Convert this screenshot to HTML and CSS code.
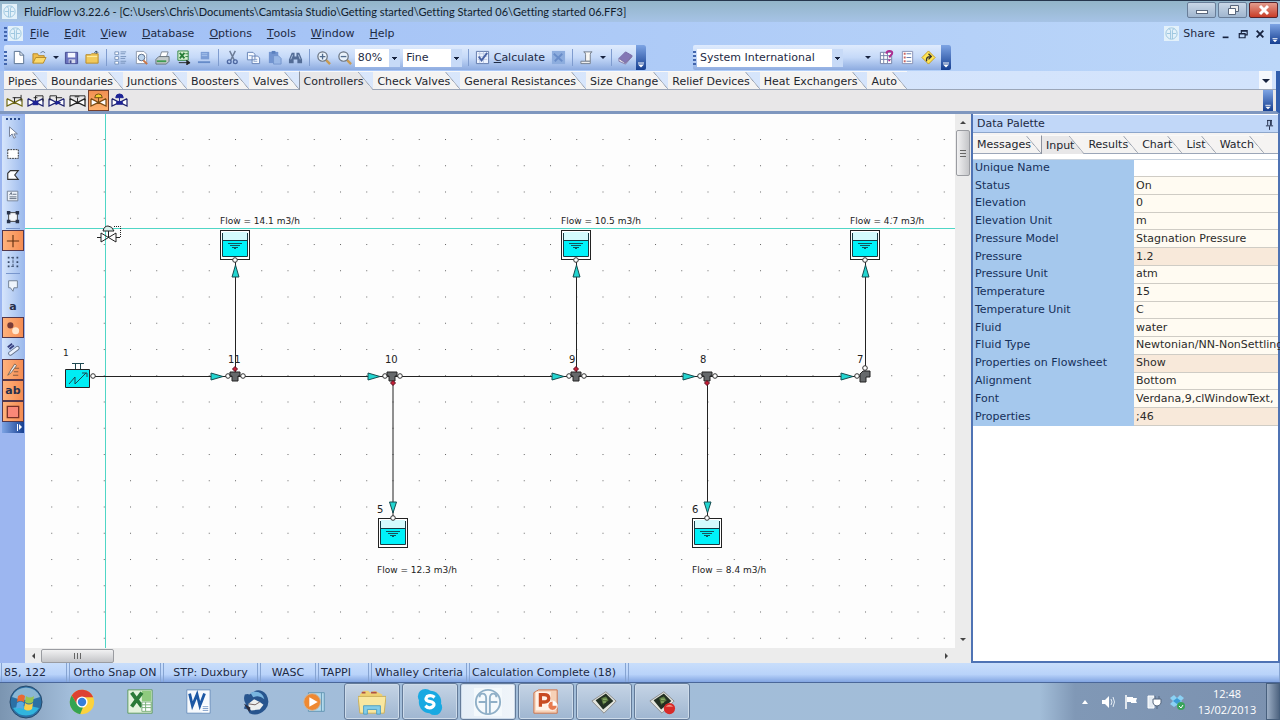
FILE: index.html
```html
<!DOCTYPE html>
<html lang="en">
<head>
    <meta charset="UTF-8">
    <meta name="viewport" content="width=device-width, initial-scale=1.0">
    <title>FluidFlow v3.22.6</title>
    <link rel="stylesheet" href="styles.css">
</head>
<body>
    <!-- shared icons -->
    <svg class="sprite" aria-hidden="true">
        <symbol id="logo" viewBox="0 0 16 16"><rect width="16" height="16" fill="#e3f1fa"/><circle cx="8" cy="8" r="6" fill="none" stroke="#9bc4de"/><path d="M7 14V5q0-2-2-2M9 14V5q0-2 2-2M3 8h4M9 8h4" fill="none" stroke="#9bc4de"/></symbol>
        <symbol id="valve" viewBox="0 0 18 16"><path d="M1 6v8l8-4-8-4M17 6v8l-8-4 8-4" fill="#fff" stroke="currentColor" stroke-width="1.3"/></symbol>
        <symbol id="tank" viewBox="0 0 30 31"><rect x=".5" y=".5" width="29" height="29" fill="#fff" stroke="#222"/><rect x="3" y="2" width="24" height="9" fill="#d4fbfd"/><rect x="3" y="11" width="24" height="15" fill="#00f2fa"/><path d="M2.500 3v23.500h25V3M3 10.500h24" fill="none" stroke="#163c44"/><path d="M8 13.500h14M10 15.500h10M12 17.500h6M14 18.500h2" stroke="#14545c"/></symbol>
        <symbol id="cap" viewBox="0 0 10 24"><path d="M2 17.500h6" stroke="#fff"/><path d="M2 19h6L5 22z" fill="#fff"/></symbol>
        <symbol id="magnifier" viewBox="0 0 16 16"><path d="M10 10l5 5" stroke="#c79a52" stroke-width="2.500"/><circle cx="7" cy="7" r="5" fill="#e9f2fb" stroke="#68727f" stroke-width="1.300"/></symbol>
        <symbol id="camtasia" viewBox="0 0 30 30"><path d="M2 14L17 4l11 10-13 13z" fill="#e3e5df" stroke="#888"/><path d="M6 13l11-7 8 8-11 9z" fill="#233023"/><path d="M12 11l5-2 3 4-6 5z" fill="#59783d"/><path d="M14 12h4M14 15h3" stroke="#a9c987"/></symbol>
    </svg>

    <header class="title-bar">
        <svg class="icon"><use href="#logo"/></svg>
        <h1>FluidFlow v3.22.6 - [C:\Users\Chris\Documents\Camtasia Studio\Getting started\Getting Started 06\Getting started 06.FF3]</h1>
        <div class="window-buttons">
            <button aria-label="Minimize"><svg viewBox="0 0 16 12"><rect x="2.500" y="6.500" width="11" height="3" fill="#fff" stroke="#59677c"/></svg></button>
            <button aria-label="Restore"><svg viewBox="0 0 16 12"><path d="M5.500 1.500h8v6h-8z" fill="#eee" stroke="#59677c"/><path d="M3.500 4.500h7v6h-7z" fill="#fff" stroke="#59677c"/></svg></button>
            <button class="close" aria-label="Close"><svg viewBox="0 0 16 12"><path d="M4 2l8 8M12 2l-8 8" stroke="#fff" stroke-width="3"/></svg></button>
        </div>
    </header>

    <nav class="menu-bar">
        <span class="grip"></span>
        <svg class="icon"><use href="#logo"/></svg>
        <button><u>F</u>ile</button>
        <button><u>E</u>dit</button>
        <button><u>V</u>iew</button>
        <button><u>D</u>atabase</button>
        <button><u>O</u>ptions</button>
        <button><u>T</u>ools</button>
        <button><u>W</u>indow</button>
        <button><u>H</u>elp</button>
        <div class="menu-right">
            <button class="share"><svg class="icon"><use href="#logo"/></svg>Share</button>
            <button class="mini" aria-label="Minimize document"><svg viewBox="0 0 12 12"><path d="M2 10h7" stroke="#17233f" stroke-width="2"/></svg></button>
            <button class="mini" aria-label="Restore document"><svg viewBox="0 0 12 12"><path d="M4 5V2h7v5H9M1.500 5.500h7v5h-7zM4 2.500h7M2 6h6" fill="none" stroke="#17233f" stroke-width="1.400"/></svg></button>
            <button class="mini" aria-label="Close document"><svg viewBox="0 0 12 12"><path d="M2 2l8 8M10 2l-8 8" stroke="#17233f" stroke-width="2.200"/></svg></button>
            <button class="cap" aria-label="Menu options"><svg><use href="#cap"/></svg></button>
        </div>
    </nav>

    <div class="toolbars">
        <div class="toolbar main-tools">
            <span class="grip"></span>
            <button class="tool" aria-label="New"><svg viewBox="0 0 16 16"><path d="M3.500 1.500h6l4 4v9h-10z" fill="#fff" stroke="#58708f"/><path d="M9.500 1.500v4h4" fill="none" stroke="#58708f"/></svg></button>
            <button class="tool" aria-label="Open"><svg viewBox="0 0 16 16"><path d="M1 14V4h5l1 2h6v3" fill="#f0bd4b" stroke="#b68a28"/><path d="M1 14l3-6h11l-3 6z" fill="#fbda6d" stroke="#b68a28"/><path d="M9 3q3-3 5 0" fill="none" stroke="#657c99"/></svg></button>
            <button class="drop" aria-label="Recent files"></button>
            <button class="tool" aria-label="Save"><svg viewBox="0 0 16 16"><path d="M1.500 2.500h13v12h-13z" fill="#6a72bd" stroke="#454c91"/><path d="M4 3h8v5H4z" fill="#f4f6ff"/><path d="M5 10h7v4H5z" fill="#d5d9ec"/><path d="M6 11h2v3H6z" fill="#454c91"/></svg></button>
            <button class="tool" aria-label="Close file"><svg viewBox="0 0 16 16"><path d="M1 14V5h5l1-1h7v10z" fill="#f1c95b" stroke="#b68a28"/><path d="M2 7h11" stroke="#fff0a8"/><path d="M12 4V1M10 3l2-2 2 2" fill="none" stroke="#384c5f"/></svg></button>
            <span class="sep"></span>
            <button class="tool" aria-label="Details"><svg viewBox="0 0 16 16"><path d="M2 2h4v3H2zM2 7h4v3H2zM2 12h4v3H2z" fill="#fff" stroke="#7793bb"/><path d="M8 2h6M8 4h5M8 7h6M8 9h5M8 12h6M8 14h5" stroke="#7793bb"/></svg></button>
            <button class="tool" aria-label="Print preview"><svg viewBox="0 0 16 16"><path d="M2.500 1.500h8l3 3v10h-11z" fill="#fff" stroke="#8b98ab"/><circle cx="8" cy="8" r="3.500" fill="#bdd5ee" stroke="#586a86"/><path d="M10 11l4 4" stroke="#c87444" stroke-width="2"/></svg></button>
            <button class="tool" aria-label="Print"><svg viewBox="0 0 16 16"><path d="M5 8l2-6h7l-2 6z" fill="#fff" stroke="#7d8894"/><path d="M1 10l3-3h11v5l-3 3H1z" fill="#c3c9ca" stroke="#65717a"/><path d="M2 12h10" stroke="#3f9b52" stroke-width="2"/></svg></button>
            <button class="tool" aria-label="Export to Excel"><svg viewBox="0 0 16 16"><path d="M2 1h11v10H2z" fill="#d7f0d2" stroke="#318342"/><path d="M4 3l5 6M9 3L4 9" stroke="#267d38" stroke-width="2"/><path d="M10 4h3M10 7h3" stroke="#318342"/><path d="M3 13.500h10M11 11l4 2.500-4 2.500" fill="#222" stroke="#222"/></svg></button>
            <button class="tool" aria-label="Send"><svg viewBox="0 0 16 16"><path d="M4 2h9v8H4z" fill="#7b9dd5"/><path d="M5 4h6M5 6h6" stroke="#a9c4ed"/><path d="M1 13h13" stroke="#668bc9" stroke-width="2"/></svg></button>
            <span class="sep"></span>
            <button class="tool" aria-label="Cut"><svg viewBox="0 0 16 16"><path d="M5 1l5 10M11 1L6 11" stroke="#6b7b96" stroke-width="1.500"/><circle cx="4.500" cy="12.500" r="2" fill="none" stroke="#4c66a0" stroke-width="1.400"/><circle cx="11" cy="12.500" r="2" fill="none" stroke="#4c66a0" stroke-width="1.400"/></svg></button>
            <button class="tool" aria-label="Copy"><svg viewBox="0 0 16 16"><path d="M1.500 2.500h6l2 2v6h-8zM6.500 6.500h6l2 2v6h-8z" fill="#f5f9ff" stroke="#6481b4"/><path d="M3 6h4M8 10h4M8 12h4" stroke="#89a2ca"/></svg></button>
            <button class="tool" aria-label="Paste"><svg viewBox="0 0 16 16"><path d="M2 2h10v12H2z" fill="#7395d0"/><path d="M5 1h4v3H5z" fill="#5b80be"/><path d="M7 6h5l3 3v6H7z" fill="#9ab8e6" stroke="#7394cc"/></svg></button>
            <button class="tool" aria-label="Find"><svg viewBox="0 0 16 16"><path d="M4 3h3v4h2V3h3l3 7v4h-5v-4H6v4H1v-4z" fill="#536c96"/><path d="M3 10l2-5M11 5l2 5" stroke="#a8bede"/></svg></button>
            <span class="sep"></span>
            <button class="tool" aria-label="Zoom in"><svg viewBox="0 0 16 16"><use href="#magnifier"/><path d="M4 7h6M7 4v6" stroke="#526c8d" stroke-width="1.400"/></svg></button>
            <button class="tool" aria-label="Zoom out"><svg viewBox="0 0 16 16"><use href="#magnifier"/><path d="M4 7h6" stroke="#526c8d" stroke-width="1.400"/></svg></button>
            <span class="select zoom"><select aria-label="Zoom"><option>80%</option></select></span>
            <span class="select grid-size"><select aria-label="Grid"><option>Fine</option></select></span>
            <span class="sep"></span>
            <button class="calculate"><svg viewBox="0 0 16 16"><path d="M1.500 1.500h13v13h-13z" fill="#edf3ff" stroke="#6079aa"/><path d="M3 4h10M3 7h10M3 10h10M5 2v12M9 2v12" stroke="#bfcde6"/><path d="M4 7l3 4 6-8" fill="none" stroke="#4963a4" stroke-width="2"/></svg><span><u>C</u>alculate</span></button>
            <button class="tool" aria-label="Stop"><svg viewBox="0 0 16 16"><path d="M1 1h14v14H1z" fill="#8dadde"/><path d="M3 4l9 8M12 4l-8 8" stroke="#698dc9" stroke-width="2"/></svg></button>
            <span class="sep"></span>
            <button class="tool" aria-label="Scripts"><svg viewBox="0 0 16 16"><path d="M5 2h9q-2 0-2 3v7H7V5q0-3-2-3z" fill="#f7f7f4" stroke="#737e8c"/><path d="M2 12h10v2.500H2z" fill="#eee" stroke="#737e8c"/></svg></button>
            <button class="drop" aria-label="Script list"></button>
            <span class="sep"></span>
            <button class="tool" aria-label="Help contents"><svg viewBox="0 0 16 16"><path d="M1 9l7-7 7 4-7 8z" fill="#8377b5" stroke="#7366a2"/><path d="M1 9v3l7 3 7-8-7 7z" fill="#eee" stroke="#8377a8"/></svg></button>
            <button class="cap" aria-label="Toolbar options"><svg><use href="#cap"/></svg></button>
        </div>
        <div class="toolbar unit-tools">
            <span class="grip"></span>
            <span class="select units"><select aria-label="Unit system"><option>System International</option></select></span>
            <button class="drop wide" aria-label="Unit sets"></button>
            <button class="tool" aria-label="What is this"><svg viewBox="0 0 16 16"><path d="M1.500 2.500h12v12h-12z" fill="#fff" stroke="#7480a6"/><path d="M2 6h11M2 10h11M5 3v11M9 3v11" stroke="#7480a6"/><path d="M8 4q0-3 3-3 4 0 3 3-2 2-3 4M11 10v2" fill="none" stroke="#ae2c91" stroke-width="2"/></svg></button>
            <button class="tool" aria-label="List"><svg viewBox="0 0 16 16"><path d="M2.500 1.500h11v13h-11z" fill="#fff" stroke="#8791b4"/><path d="M4 4h2M4 8h2M4 12h2" stroke="#c96463" stroke-width="2"/><path d="M7 4h5M7 8h5M7 12h5" stroke="#5f7aad"/></svg></button>
            <button class="tool" aria-label="Hint"><svg viewBox="0 0 16 16"><path d="M8 1l7 7-7 7-7-7z" fill="#ffe553" stroke="#c29a24"/><path d="M6 12q-1-5 4-5M8 4l3 3-3 3" fill="none" stroke="#333" stroke-width="1.400"/></svg></button>
            <button class="cap" aria-label="Toolbar options"><svg><use href="#cap"/></svg></button>
        </div>
    </div>

    <section class="components">
        <div class="tabs" role="tablist">
            <button role="tab">Pipes</button>
            <button role="tab">Boundaries</button>
            <button role="tab">Junctions</button>
            <button role="tab">Boosters</button>
            <button role="tab">Valves</button>
            <button role="tab" class="active" aria-selected="true">Controllers</button>
            <button role="tab">Check Valves</button>
            <button role="tab">General Resistances</button>
            <button role="tab">Size Change</button>
            <button role="tab">Relief Devices</button>
            <button role="tab">Heat Exchangers</button>
            <button role="tab">Auto</button>
            <button class="tab-menu" aria-label="More tabs"></button>
        </div>
        <div class="component-row">
            <button class="component olive" aria-label="Pressure reducer"><svg viewBox="0 0 18 16"><use href="#valve"/><path d="M9 10V5h7M16 2v7M7 5h3" fill="none" stroke="#222"/></svg></button>
            <button class="component navy" aria-label="Pressure sustainer"><svg viewBox="0 0 18 16"><use href="#valve"/><path d="M9 10V3h8v6M7 5h4" fill="none" stroke="#222"/><path d="M6 8h6v5H6z" fill="#1d2395"/></svg></button>
            <button class="component navy" aria-label="Flow controller"><svg viewBox="0 0 18 16"><use href="#valve"/><path d="M2 8V3h7v7M8 5h7" fill="none" stroke="#222"/><path d="M8 8l6 2-6 3z" fill="#1d2395"/></svg></button>
            <button class="component" aria-label="Differential controller"><svg viewBox="0 0 18 16"><use href="#valve"/><path d="M1 7V3h16v5M6 4h5M9 10V5" fill="none" stroke="#222"/></svg></button>
            <button class="component active" aria-label="Control valve"><svg viewBox="0 0 18 16"><use href="#valve"/><path d="M9 10V5M5 5q0-4 4-4t4 4z" fill="#f5cf2f" stroke="#6b4a12"/></svg></button>
            <button class="component navy" aria-label="Actuated valve"><svg viewBox="0 0 18 16"><use href="#valve"/><path d="M9 10V5M5 5q0-4 4-4t4 4zM6 9h6v3H6z" fill="#1d2395" stroke="#1d2395"/></svg></button>
            <button class="cap" aria-label="Component options"><svg><use href="#cap"/></svg></button>
        </div>
    </section>

    <main class="workspace">
        <aside class="side-bar">
            <div class="side-tools">
                <span class="grip flat"></span>
                <button aria-label="Select"><svg viewBox="0 0 16 16"><path d="M4 1v11l3-3 2 5 2-1-2-4h4z" fill="#fff" stroke="#68748b"/></svg></button>
                <button aria-label="Select area"><svg viewBox="0 0 16 16"><path d="M2 3h12v10H2z" fill="#fff" stroke="#222" stroke-dasharray="2 1"/></svg></button>
                <button aria-label="Select polygon"><svg viewBox="0 0 16 16"><path d="M2 13V6l3-3h9l-4 5 4 5z" fill="#fff" stroke="#333" stroke-width="1.300"/></svg></button>
                <button aria-label="Add text"><svg viewBox="0 0 16 16"><path d="M1.500 2.500h12v11h-12z" fill="#eef3fb" stroke="#6e7b90"/><path d="M4 7l2-3 1 3M8 6h4M4 9h8M4 11h8" fill="none" stroke="#536072"/></svg></button>
                <button aria-label="Resize"><svg viewBox="0 0 16 16"><path d="M3 3h10v10H3z" fill="#f5f7fb" stroke="#333"/><path d="M1 1h4v4H1zM11 1h4v4h-4zM1 11h4v4H1zM11 11h4v4h-4z" fill="#28324a"/></svg></button>
                <span class="rule"></span>
                <button class="active" aria-label="Ortho snap"><svg viewBox="0 0 16 16"><path d="M8 1v14M1 8h14" stroke="#603010" stroke-width="1.300"/></svg></button>
                <button aria-label="Grid"><svg viewBox="0 0 16 16"><path d="M3 2v12M13 2v12" stroke="#354766" stroke-width="2" stroke-dasharray="2 3"/><path d="M8 2v12M6 3h4M6 13h4" stroke="#354766" stroke-dasharray="3 1"/></svg></button>
                <span class="rule"></span>
                <button aria-label="Comments"><svg viewBox="0 0 16 16"><path d="M3 2h10v8H9l-1 4-3-4H3z" fill="#eff5fc" stroke="#69788c"/></svg></button>
                <button class="letter">a</button>
                <button class="active" aria-label="Show nodes"><svg viewBox="0 0 16 16"><circle cx="5" cy="5" r="3.500" fill="#783b38"/><circle cx="11" cy="11" r="4" fill="#ffe7cf"/></svg></button>
                <button aria-label="Show pipes"><svg viewBox="0 0 16 16"><path d="M2 6l5-4M4 8l5-4" stroke="#373f7f" stroke-width="2"/><path d="M5 13l8-6" stroke="#64728c" stroke-width="5" stroke-linecap="round"/><path d="M5 13l8-6" stroke="#eaf2ff" stroke-width="3" stroke-linecap="round"/></svg></button>
                <button class="active" aria-label="Flow direction"><svg viewBox="0 0 16 16"><path d="M2 14l4-7 4-6 2 2-6 8z" fill="#e7eaf0" stroke="#75604f"/><path d="M10 6h5M9 10h5M8 14h6" stroke="#72523e"/></svg></button>
                <button class="active letter">ab</button>
                <button class="active" aria-label="Colour"><svg viewBox="0 0 16 16"><path d="M1.500 1.500h13v13h-13z" fill="#fa8878" stroke="#783027" stroke-width="1.500"/></svg></button>
                <button class="side-cap" aria-label="More tools"><svg viewBox="0 0 22 11"><path d="M15.500 2v7" stroke="#fff"/><path d="M17 2v6l3-3z" fill="#fff"/></svg></button>
            </div>
        </aside>

        <section class="flowsheet">
            <div class="sheet">
                <svg class="diagram">
                    <defs>
                        <pattern id="dots" x="25" y="139" width="26.25" height="26.25" patternUnits="userSpaceOnUse"><rect width="1" height="1" fill="#666"/></pattern>
                        <g id="right"><path d="M-6-3.500L6 0l-12 3.500z" fill="#22d5d0" stroke="#174d50"/></g>
                        <g id="up"><path d="M-3.500 6L0-6l3.500 12z" fill="#22d5d0" stroke="#174d50"/></g>
                        <g id="down"><path d="M-3.500-5h7L0 6z" fill="#22d5d0" stroke="#174d50"/></g>
                        <circle id="port" r="2.300" fill="#fff" stroke="#333"/>
                        <path id="closed" d="M0-2.500L2.500 0 0 2.500-2.500 0z" fill="#c61d35" stroke="#5c1020"/>
                        <path id="tee" d="M-5-4H5v4H3v5h-6V0h-2z" fill="#66696b" stroke="#222"/>
                    </defs>
                    <g transform="translate(-25 -114)">
                        <rect x="40" y="130" width="3000" height="2000" fill="url(#dots)"/>
                        <rect class="cross" x="105" y="114" width="1" height="2000"/>
                        <rect class="cross" x="25" y="228" width="3000" height="1"/>

                        <path class="pipe" d="M93 376.500h772M235.500 260v116M576.500 260v116M865.500 260v110M393 376v142M707.500 376v142"/>

                        <!-- flow arrows -->
                        <use href="#right" x="217" y="376.500"/><use href="#right" x="374" y="376.500"/><use href="#right" x="558" y="376.500"/><use href="#right" x="689" y="376.500"/><use href="#right" x="847" y="376.500"/>
                        <use href="#up" x="235.500" y="271"/><use href="#up" x="576.500" y="271"/><use href="#up" x="865.500" y="271"/>
                        <use href="#down" x="393" y="507"/><use href="#down" x="707.500" y="507"/>

                        <!-- tanks -->
                        <use href="#tank" x="220" y="230" width="30" height="31"/>
                        <use href="#tank" x="561" y="230" width="30" height="31"/>
                        <use href="#tank" x="850" y="230" width="30" height="31"/>
                        <use href="#tank" x="378" y="518" width="30" height="31"/>
                        <use href="#tank" x="692" y="518" width="30" height="31"/>
                        <use href="#port" x="235" y="260"/><use href="#port" x="576" y="260"/><use href="#port" x="865" y="260"/><use href="#port" x="393" y="518"/><use href="#port" x="707" y="518"/>

                        <!-- junctions -->
                        <use href="#port" x="228" y="376"/><use href="#port" x="243" y="376"/><use href="#tee" x="235" y="376"/><use href="#closed" x="235" y="369"/>
                        <use href="#port" x="385" y="376"/><use href="#port" x="400" y="376"/><use href="#tee" x="392" y="376"/><use href="#closed" x="393" y="383"/>
                        <use href="#port" x="569" y="376"/><use href="#port" x="584" y="376"/><use href="#tee" x="576" y="376"/><use href="#closed" x="576" y="369"/>
                        <use href="#port" x="700" y="376"/><use href="#port" x="715" y="376"/><use href="#tee" x="707" y="376"/><use href="#closed" x="707" y="383"/>
                        <use href="#port" x="857" y="376"/><use href="#port" x="865" y="368"/>
                        <path d="M863 371h7v6h-4v5h-6v-8z" fill="#66696b" stroke="#222"/>

                        <!-- supply -->
                        <path d="M65.500 369.500h24v18h-24z" fill="#00eef4" stroke="#222"/>
                        <path d="M72 363.500h12M75.500 364v5M80.500 364v5M69 384l6-7v7l11-11M82 373h5v4" fill="none" stroke="#1c4750"/>
                        <use href="#port" x="93" y="376"/>

                        <!-- valve under the cursor -->
                        <path d="M97 237.500h4M116 237.500h4M108.500 237v-6M101 233v9l15-9v9z" fill="none" stroke="#222"/>
                        <path d="M103 231q1-5 5-5t6 5z" fill="#d9f1ed" stroke="#222"/>
                        <path d="M114 226.500h6.500V237" fill="none" stroke="#222" stroke-dasharray="1 1"/>

                        <g class="flow-text">
                            <text x="220" y="224">Flow = 14.1 m3/h</text>
                            <text x="561" y="224">Flow = 10.5 m3/h</text>
                            <text x="850" y="224">Flow = 4.7 m3/h</text>
                            <text x="377" y="573">Flow = 12.3 m3/h</text>
                            <text x="692" y="573">Flow = 8.4 m3/h</text>
                            <text x="63" y="356">1</text>
                        </g>
                        <g class="node-text">
                            <text x="228" y="363">11</text>
                            <text x="385" y="363">10</text>
                            <text x="569" y="363">9</text>
                            <text x="700" y="363">8</text>
                            <text x="857" y="363">7</text>
                            <text x="377" y="513">5</text>
                            <text x="692" y="513">6</text>
                        </g>
                    </g>
                </svg>
            </div>
            <div class="scroll-v"><span class="arrow-up"></span><span class="thumb"></span><span class="arrow-down"></span></div>
            <div class="scroll-h"><span class="arrow-left"></span><span class="thumb"></span><span class="arrow-right"></span></div>
        </section>

        <section class="palette">
            <div class="palette-title">
                <h2>Data Palette</h2>
                <button aria-label="Pin"><svg viewBox="0 0 10 12"><path d="M3 1v6M7 1v6M2.500 1.500h5M1 7.500h8M5 8v4M6 2v5" fill="none" stroke="#17233f"/></svg></button>
            </div>
            <div class="tabs" role="tablist">
                <button role="tab">Messages</button>
                <button role="tab" class="active" aria-selected="true">Input</button>
                <button role="tab">Results</button>
                <button role="tab">Chart</button>
                <button role="tab">List</button>
                <button role="tab">Watch</button>
            </div>
            <table>
                <tr><th scope="row">Unique Name</th><td class="blank"></td></tr>
                <tr><th scope="row">Status</th><td>On</td></tr>
                <tr><th scope="row">Elevation</th><td>0</td></tr>
                <tr><th scope="row">Elevation Unit</th><td>m</td></tr>
                <tr><th scope="row">Pressure Model</th><td>Stagnation Pressure</td></tr>
                <tr class="changed"><th scope="row">Pressure</th><td>1.2</td></tr>
                <tr><th scope="row">Pressure Unit</th><td>atm</td></tr>
                <tr><th scope="row">Temperature</th><td>15</td></tr>
                <tr><th scope="row">Temperature Unit</th><td>C</td></tr>
                <tr><th scope="row">Fluid</th><td>water</td></tr>
                <tr><th scope="row">Fluid Type</th><td>Newtonian/NN-NonSettling</td></tr>
                <tr class="changed"><th scope="row">Properties on Flowsheet</th><td>Show</td></tr>
                <tr><th scope="row">Alignment</th><td>Bottom</td></tr>
                <tr><th scope="row">Font</th><td>Verdana,9,clWindowText,</td></tr>
                <tr class="changed"><th scope="row">Properties</th><td>;46</td></tr>
            </table>
        </section>
    </main>

    <footer class="status-bar">
        <span class="coords">85, 122</span>
        <span>Ortho Snap ON</span>
        <span>STP: Duxbury</span>
        <span>WASC</span>
        <span class="coords">TAPPI</span>
        <span>Whalley Criteria</span>
        <span class="coords">Calculation Complete (18)</span>
        <span></span>
    </footer>

    <div class="task-bar">
        <button class="start" aria-label="Start"><svg viewBox="0 0 34 34"><circle cx="17" cy="17" r="16" fill="#2b70a5" stroke="#27496b"/><path d="M3 12a15 15 0 0 1 28 0q-14 6-28 0z" fill="#8ab6d3"/><path d="M4 23q13-4 26 0a15 15 0 0 1-26 0z" fill="#31b5dd"/><path d="M9 11q4-3 7 0l-1 6q-4-2-7 0z" fill="#e96a32"/><path d="M17 11q4 3 8 0l-1 6q-4 3-8 0z" fill="#96c550"/><path d="M8 18q4-3 7 0l-1 6q-4-2-7 0z" fill="#59a9e2"/><path d="M16 18q4 3 8 0l-1 6q-4 3-8 0z" fill="#f9cf48"/></svg></button>
        <button class="task" aria-label="Chrome"><svg viewBox="0 0 30 30"><circle cx="15" cy="15" r="13" fill="#fbd23e"/><path d="M4 8a13 13 0 0 1 23 2H15l-5 8z" fill="#dd4132"/><path d="M4 8l6 10 6 3-3 7A13 13 0 0 1 4 8z" fill="#35a451"/><circle cx="15" cy="15" r="6" fill="#fff"/><circle cx="15" cy="15" r="4.500" fill="#367edb"/></svg></button>
        <button class="task" aria-label="Excel"><svg viewBox="0 0 30 30"><path d="M2 2h26v25H2z" fill="#e4f3dd" stroke="#5a995c"/><path d="M17 3h10v11H17z" fill="#8fca7e"/><path d="M6 5l11 15M17 5L6 20" stroke="#2b7a38" stroke-width="4"/><path d="M17 15h10v10H17zM17 18h10M17 21h10M21 15v10" fill="#fff" stroke="#79ae78"/></svg></button>
        <button class="task" aria-label="Word"><svg viewBox="0 0 30 30"><path d="M3 2h25v25H3z" fill="#f6f9fd" stroke="#6b8fbc"/><path d="M6 6l3 13 5-12 3 12 5-13" fill="none" stroke="#1c57a4" stroke-width="3"/><path d="M19 18h8v8h-8z" fill="#fff"/><path d="M20 20h6M20 22h6M20 24h6" stroke="#7b9bc7"/></svg></button>
        <button class="task" aria-label="Thunderbird"><svg viewBox="0 0 30 30"><path d="M3 7q3-1 5 0Q18-2 26 7q5 9-1 16-8 8-17 4l-2-4-4-1 2-5q-3-4-1-10z" fill="#28558e"/><path d="M9 5q12-4 15 7-6-5-12-2z" fill="#79b5df"/><path d="M7 17l6-5 6 3 4 3-4 5-9 1-3-3z" fill="#edf0ef"/><path d="M7 17l7 1 5-3" fill="none" stroke="#715e59"/><path d="M2 17l7 4-1 5z" fill="#2e2d3b"/></svg></button>
        <button class="task" aria-label="Media player"><svg viewBox="0 0 30 30"><path d="M9 5h17v20H9z" fill="#b2d9ec" stroke="#6396b3"/><path d="M23 5v20" stroke="#6396b3"/><circle cx="13" cy="15" r="9" fill="#ef8932" stroke="#c8b9a8"/><path d="M10 10l9 5-9 5z" fill="#fff"/></svg></button>
        <button class="task open" aria-label="Explorer"><svg viewBox="0 0 30 30"><path d="M2 7l4-4h5l2 2 5-2 8 4v19H2z" fill="#efd174"/><path d="M4 5h4M14 5h6" stroke="#ae5043" stroke-width="2"/><path d="M0 9h30l-2 18H2z" fill="#f9e7a0" stroke="#c9ad57"/><path d="M6 28v-9h18v9h-4v-5H10v5z" fill="#83cde9" stroke="#4e9dc1"/></svg></button>
        <button class="task open" aria-label="Skype"><svg viewBox="0 0 30 30"><circle cx="10" cy="9" r="8" fill="#19a9e2"/><circle cx="20" cy="21" r="8" fill="#19a9e2"/><circle cx="15" cy="15" r="12" fill="#19a9e2"/><path d="M20 10q-4-3-8-1-3 4 1 5l4 1q4 2 1 5-4 3-8-1" fill="none" stroke="#fff" stroke-width="3.500"/></svg></button>
        <button class="task open current" aria-label="FluidFlow"><svg viewBox="0 0 30 30"><path d="M0 0h30v30H0z" fill="#f4f9fc"/><circle cx="15" cy="15" r="13" fill="none" stroke="#8fafc7" stroke-width="2"/><path d="M13 28V11q0-5-4-5-3 0-3 4M17 28V11q0-5 4-5 3 0 3 4M5 15h8M17 15h8" fill="none" stroke="#8fafc7" stroke-width="2"/></svg></button>
        <button class="task open" aria-label="PowerPoint"><svg viewBox="0 0 30 30"><path d="M2 5l5-3h20v25H2z" fill="#f6d1b7" stroke="#cb7047"/><path d="M4 4h16v20H4z" fill="#fff2e8"/><path d="M9 20V7h4q5 0 5 4t-5 4h-4" fill="none" stroke="#c84b22" stroke-width="3.500"/><circle cx="22" cy="19" r="5" fill="#e87b50" stroke="#fff"/><path d="M22 19v-5a5 5 0 0 1 5 5z" fill="#fff"/></svg></button>
        <button class="task open" aria-label="Camtasia"><svg viewBox="0 0 30 30"><use href="#camtasia"/></svg></button>
        <button class="task open" aria-label="Camtasia Recorder"><svg viewBox="0 0 30 30"><use href="#camtasia"/><circle cx="23" cy="22" r="6" fill="#d82a28"/><path d="M19 20q4-4 8 0z" fill="#f19182"/></svg></button>
        <div class="tray">
            <button aria-label="Show hidden icons"><svg viewBox="0 0 16 16"><path d="M5 10l3-4 3 4z" fill="#fff"/></svg></button>
            <button aria-label="Volume"><svg viewBox="0 0 16 16"><path d="M2 6h3l4-4v12l-4-4H2z" fill="#fff"/><path d="M11 5q2 3 0 6M13 3q3 5 0 10" fill="none" stroke="#e5edf5"/></svg></button>
            <button aria-label="Action centre"><svg viewBox="0 0 16 16"><path d="M3 1v14" stroke="#fff" stroke-width="1.500"/><path d="M4 3h6v1h4l-1 3 1 2H8V8H4z" fill="#fff"/></svg></button>
            <button aria-label="Power"><svg viewBox="0 0 16 16"><path d="M2 2h6v12H2z" fill="#e2eaf2" stroke="#fff"/><path d="M7 5h8v4q-1 3-4 3t-4-3zM9 2v3M13 2v3M11 12v3" fill="#fff" stroke="#54677f"/></svg></button>
            <button aria-label="Dropbox"><svg viewBox="0 0 16 16"><path d="M1 4l4-3 3 3 3-3 4 3-3 3 3 3-4 3-3-2-3 2-4-3 3-3z" fill="#8bd1f4"/><path d="M4 7l4-3 4 3-4 3z" fill="#3b9bd6"/><circle cx="12" cy="12" r="4" fill="#39a35a"/><path d="M10 12l2 2 2-3" fill="none" stroke="#fff"/></svg></button>
            <div class="clock"><time>12:48</time><time>13/02/2013</time></div>
            <button class="show-desktop" aria-label="Show desktop"></button>
        </div>
    </div>
</body>
</html>
```
FILE: styles.css
```css
* {
    box-sizing: border-box;
}

body {
    margin: 0;
    height: 100vh;
    display: flex;
    flex-direction: column;
    overflow: hidden;
    font-family: 'DejaVu Sans', Verdana, sans-serif;
    font-size: 11px;
    line-height: 14px;
    color: #1d2a44;
    background: #b6d1f8;
}

button, select {
    font: inherit;
    color: inherit;
    padding: 0;
    margin: 0;
    border: none;
    background: none;
    white-space: nowrap;
}

button {
    display: flex;
    align-items: center;
    justify-content: center;
    flex-shrink: 0;
}

h1, h2 {
    margin: 0;
    font-size: inherit;
    font-weight: normal;
}

.sprite {
    position: absolute;
    width: 0;
    height: 0;
}

.icon {
    width: 15px;
    height: 15px;
    flex-shrink: 0;
}

/* title and menu */
.title-bar {
    display: flex;
    align-items: center;
    gap: 7px;
    height: 22px;
    padding-left: 2px;
    border-top: 1px solid #26364d;
    background: linear-gradient(#93b5c9, #a6c3e6);
}

.title-bar h1 {
    flex: 1;
    font-family: Lato, 'Open Sans', sans-serif;
    font-size: 11px;
    font-variant-ligatures: none;
    line-height: 18px;
    color: #101b2c;
    white-space: nowrap;
    overflow: hidden;
}

.window-buttons {
    display: flex;
    align-self: flex-start;
    gap: 2px;
    padding: 1px 2px;
}

.window-buttons button {
    width: 29px;
    height: 16px;
    border: 1px solid #697e99;
    border-radius: 2px;
    background: linear-gradient(#c9d7e7, #a0b6cf);
}

.window-buttons svg {
    width: 16px;
    height: 12px;
}

.window-buttons .close {
    border-color: #59232a;
    background: linear-gradient(#e39c8d, #c93d28);
}

.menu-bar {
    display: flex;
    align-items: center;
    height: 23px;
    padding-left: 4px;
    background: linear-gradient(90deg, #9fbef5, #bcd7f9);
}

.menu-bar > button {
    margin-left: 15px;
}

.menu-bar .icon + button {
    margin-left: 7px;
}

.menu-bar u {
    text-underline-offset: 1px;
}

.menu-right {
    display: flex;
    align-items: center;
    margin-left: auto;
}

.share {
    gap: 4px;
    margin-right: 2px;
}

.mini {
    width: 17px;
}

.mini svg {
    width: 10px;
    height: 12px;
}

.menu-right .cap {
    margin-left: 2px;
    height: 20px;
}

.grip {
    width: 3px;
    height: 14px;
    margin-right: 1px;
    flex-shrink: 0;
    background: repeating-linear-gradient(#4266ae 0 2px, transparent 2px 4px);
}

.cap {
    width: 10px;
    align-self: stretch;
    background: linear-gradient(#7da4e4, #163f91);
}

.cap svg {
    width: 10px;
    height: 100%;
}

/* toolbars */
.toolbars {
    display: flex;
    gap: 47px;
    height: 26px;
    padding: 0 4px 1px;
    background: linear-gradient(90deg, #9fbef5, #bcd7f9);
}

.toolbar {
    display: flex;
    align-items: center;
    border-radius: 2px;
    background: linear-gradient(#dfebfd, #c5d9f8 50%, #8dabe0);
}

.main-tools {
    width: 642px;
}

.unit-tools {
    width: 258px;
}

.toolbar .cap {
    margin-left: auto;
    border-radius: 0 2px 2px 0;
}

.tool {
    width: 21px;
    height: 21px;
}

.tool svg, .calculate svg {
    width: 15px;
    height: 15px;
}

.drop {
    width: 11px;
    height: 21px;
}

.drop::after, .tab-menu::after {
    content: '';
    border: 3px solid transparent;
    border-top-color: #17233f;
    border-bottom: 0;
}

.drop.wide {
    width: 30px;
    padding-left: 14px;
}

.sep {
    width: 1px;
    height: 17px;
    margin: 0 3px;
    background: #7f9ccf;
}

.select {
    display: flex;
    align-items: center;
    height: 18px;
    margin-right: 3px;
    background: #fff;
}

.select select {
    flex: 1;
    min-width: 0;
    height: 18px;
    padding-left: 3px;
    appearance: none;
    outline: none;
}

.select::after {
    content: '';
    width: 11px;
    height: 18px;
    background: linear-gradient(#17233f, #17233f) center 8px / 5px 1px no-repeat,
        linear-gradient(#17233f, #17233f) center 9px / 3px 1px no-repeat,
        linear-gradient(#17233f, #17233f) center 10px / 1px 1px no-repeat, #c7daf7;
}

.zoom {
    width: 48px;
}

.grid-size {
    width: 62px;
}

.units {
    width: 146px;
}

.calculate {
    gap: 4px;
    padding: 0 3px;
}

/* component tabs */
.components {
    border-bottom: 3px solid #7f97bf;
    border-right: 4px solid #315ead;
    padding-left: 4px;
    background: #a9c3f0;
}

.tabs {
    display: flex;
    align-items: flex-end;
    height: 19px;
    border-bottom: 1px solid #9ba6b8;
    background: linear-gradient(90deg, #dce8fb, #d2e3fc);
}

.tabs button {
    height: 18px;
    padding: 2px 10px 0 4px;
    color: #23262e;
    border-top: 1px solid #f9f9f9;
    background: linear-gradient(50deg, #f4f3f2 48%, #9ca3af 50%, transparent 54%) right / 15px 100% no-repeat,
        linear-gradient(#f4f3f2, #f4f3f2) left / calc(100% - 15px) 100% no-repeat;
}

.tabs .active {
    height: 19px;
    margin-bottom: -1px;
    border-left: 1px solid #8c929e;
    background: linear-gradient(50deg, #e8e7e8 48%, #9ca3af 50%, transparent 54%) right / 15px 100% no-repeat,
        linear-gradient(#e8e7e8, #e8e7e8) left / calc(100% - 15px) 100% no-repeat;
}

.tabs .tab-menu {
    width: 13px;
    margin-left: auto;
    margin-right: 4px;
    padding: 0;
    background: #f5f8fd;
}

.tab-menu::after {
    border-width: 4px 4px 0;
}

.component-row {
    display: flex;
    height: 21px;
    background: #e8e7e8;
}

.component {
    width: 21px;
    height: 21px;
    color: #222;
}

.component svg {
    width: 17px;
    height: 15px;
}

.component.olive {
    color: #716b18;
}

.component.navy {
    color: #20246f;
}

.component.active {
    border: 1px solid #76402c;
    background: linear-gradient(#f28f52, #ffb36e);
    color: #7b4b12;
}

.component-row .cap {
    margin-left: auto;
    margin-right: 3px;
}

/* workspace */
.workspace {
    display: flex;
    flex: 1;
    min-height: 0;
}

.side-bar {
    width: 25px;
    flex-shrink: 0;
    padding: 2px 0 0 2px;
    background: #9cb6f0;
}

.side-tools {
    display: flex;
    flex-direction: column;
    width: 22px;
    background: linear-gradient(90deg, #d6e5fc, #9cbaec);
}

.grip.flat {
    width: 14px;
    height: 2px;
    margin: 2px 4px;
    background: repeating-linear-gradient(90deg, #294a8c 0 2px, transparent 2px 4px);
}

.side-tools button {
    height: 21px;
}

.side-tools svg {
    width: 14px;
    height: 14px;
}

.side-tools .active {
    border: 1px solid #53374b;
    background: linear-gradient(90deg, #ffb27c, #f58d53);
}

.side-tools .letter {
    font-weight: bold;
    color: #29304c;
}

.rule {
    height: 1px;
    margin: 1px 4px;
    background: #7896cd;
}

.side-tools .side-cap {
    height: 11px;
    background: linear-gradient(90deg, #7da4e4, #163f91);
}

.side-tools .side-cap svg {
    width: 22px;
    height: 11px;
}

.flowsheet {
    flex: 1;
    min-width: 0;
    display: grid;
    grid-template-columns: 1fr 16px;
    grid-template-rows: 1fr 15px;
    background: #ececec;
}

.sheet {
    min-width: 0;
    min-height: 0;
    overflow: hidden;
    background: #fdfdfd;
}

.diagram {
    display: block;
    width: 100%;
    height: 100%;
}

.cross {
    fill: #4fd6c6;
}

.pipe {
    fill: none;
    stroke: #222;
}

.flow-text {
    font-size: 9px;
    fill: #222;
}

.node-text {
    font-size: 10px;
    fill: #222;
}

.scroll-v, .scroll-h {
    display: flex;
    align-items: center;
    background: #ececec;
}

.scroll-v {
    flex-direction: column;
    padding: 7px 0;
}

.scroll-h {
    padding: 0 7px;
}

.thumb {
    border: 1px solid #9a9ca1;
    border-radius: 2px;
}

.scroll-v .thumb {
    width: 14px;
    height: 46px;
    margin: 6px 0 auto;
    background: repeating-linear-gradient(#666 0 1px, transparent 1px 3px) center / 6px 7px no-repeat,
        linear-gradient(90deg, #f1f1f2, #c4c5c8);
}

.scroll-h .thumb {
    width: 73px;
    height: 14px;
    margin: 0 auto 0 6px;
    background: repeating-linear-gradient(90deg, #666 0 1px, transparent 1px 3px) center / 7px 6px no-repeat,
        linear-gradient(#f1f1f2, #c4c5c8);
}

.arrow-up, .arrow-down, .arrow-left, .arrow-right {
    border: 3px solid transparent;
}

.arrow-up {
    border-top: 0;
    border-bottom-color: #444;
}

.arrow-down {
    border-bottom: 0;
    border-top-color: #444;
}

.arrow-left {
    border-left: 0;
    border-right-color: #444;
}

.arrow-right {
    border-right: 0;
    border-left-color: #444;
}

/* data palette */
.palette {
    width: 309px;
    flex-shrink: 0;
    padding-top: 1px;
    border: 2px solid #4f73b4;
    border-top: 0;
    background: #fff;
}

.palette-title {
    display: flex;
    align-items: center;
    justify-content: space-between;
    height: 18px;
    padding: 1px 4px 0;
    border-bottom: 1px solid #8da6cb;
    background: #c1d7f8;
}

.palette-title svg {
    width: 9px;
    height: 11px;
}

.palette .tabs {
    height: 21px;
    background: #f5f3f2;
}

.palette .tabs button {
    padding-top: 1px;
}

table {
    width: 100%;
    height: 267px;
    margin-top: 5px;
    border-collapse: collapse;
    table-layout: fixed;
    border-top: 1px solid #c8d3df;
}

th, td {
    padding: 0 0 0 2px;
    line-height: 14px;
    white-space: nowrap;
}

th {
    width: 161px;
    text-align: left;
    font-weight: normal;
    color: #16305a;
    background: #a5c8ed;
}

td {
    color: #2c2b2a;
    background: #fffbf2;
    border-bottom: 1px solid #cfccc5;
}

.blank {
    background: #fff;
}

.changed td {
    background: #f8e9da;
}

/* status bar */
.status-bar {
    display: grid;
    grid-template-columns: 66px 92px 95px 56px 51px 96px 157px 1fr;
    gap: 2px;
    height: 20px;
    padding-left: 1px;
    border-bottom: 1px solid #4a6799;
    background: linear-gradient(#c9defb, #b9d3fa 60%, #82a5e2);
}

.status-bar span {
    padding-top: 3px;
    text-align: center;
    white-space: nowrap;
    border-left: 1px solid #86a4d2;
    border-right: 1px solid #86a4d2;
}

.status-bar .coords {
    padding-left: 2px;
    text-align: left;
}

/* task bar */
.task-bar {
    display: flex;
    align-items: stretch;
    gap: 2px;
    height: 37px;
    background: linear-gradient(90deg, #7b95b1, #a2bdda 70px, #a2bdd8 1040px, #8098b6 1075px, #7b91af);
}

.start {
    width: 52px;
}

.start svg {
    width: 34px;
    height: 34px;
}

.task {
    width: 56px;
    border-radius: 3px;
}

.task svg {
    width: 28px;
    height: 28px;
}

.open {
    border: 1px solid #647b99;
    box-shadow: inset 0 0 0 1px #cddbea;
    background: linear-gradient(#c5d4e5, #9fb6d1);
}

.current {
    background: linear-gradient(90deg, #e5eef7, #f0f5fa);
}

.tray {
    display: flex;
    align-items: center;
    margin-left: auto;
}

.tray button {
    width: 23px;
}

.tray svg {
    width: 16px;
    height: 16px;
}

.clock {
    display: flex;
    flex-direction: column;
    align-items: center;
    width: 78px;
    font-family: 'Open Sans', 'Noto Sans', sans-serif;
    font-size: 11px;
    line-height: 16px;
    color: #fff;
}

.tray .show-desktop {
    width: 14px;
    align-self: stretch;
    border: 1px solid #48607d;
    background: linear-gradient(90deg, #9badc4, #506682);
}
```
